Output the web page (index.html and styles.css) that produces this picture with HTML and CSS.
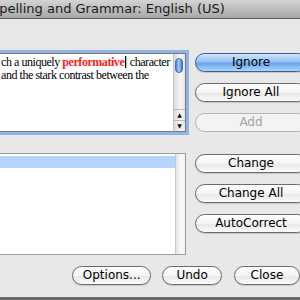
FILE: index.html
```html
<!DOCTYPE html>
<html lang="en">
<head>
    <meta charset="UTF-8">
    <meta name="viewport" content="width=device-width, initial-scale=1.0">
    <title>Spelling and Grammar</title>
    <link rel="stylesheet" href="styles.css">
</head>
<body>
    <div class="window">
        <div class="titlebar"><span class="title">Spelling and Grammar: English (US)</span></div>

        <div class="main">
            <div class="left">
                <div class="textbox">
                    <div class="text">
                        <div class="line">ch a uniquely <span class="misspelled">performative</span><span class="caret"></span> character</div>
                        <div class="line">and the stark contrast between the</div>
                    </div>
                    <div class="vscroll">
                        <div class="thumb"></div>
                        <div class="track"></div>
                        <div class="arrow up">&#9650;</div>
                        <div class="arrow down">&#9660;</div>
                    </div>
                </div>

                <div class="list">
                    <div class="rows">
                        <div class="row selected"></div>
                    </div>
                    <div class="list-scroll"></div>
                </div>
            </div>

            <div class="right">
                <div class="group">
                    <button class="btn default">Ignore</button>
                    <button class="btn">Ignore All</button>
                    <button class="btn disabled">Add</button>
                </div>
                <div class="group">
                    <button class="btn">Change</button>
                    <button class="btn">Change All</button>
                    <button class="btn">AutoCorrect</button>
                </div>
            </div>
        </div>

        <div class="bottom">
            <button class="btn options">Options...</button>
            <button class="btn undo">Undo</button>
            <button class="btn close">Close</button>
        </div>
    </div>
</body>
</html>
```

FILE: styles.css
```css
body {
    margin: 0;
    padding: 0;
    width: 300px;
    height: 300px;
    overflow: hidden;
    background: #e8e8e8;
    font-family: 'DejaVu Sans', 'Lucida Grande', sans-serif;
    font-size: 12px;
}
.window {
    height: 300px;
    box-sizing: border-box;
    border-bottom: 3px solid #6a6a6a;
    overflow: hidden;
}
.titlebar {
    height: 18px;
    line-height: 18px;
    background: linear-gradient(#d4d4d4, #b9b9b9 60%, #a8a8a8);
    border-bottom: 1px solid #5a5a5a;
    color: #1a1a1a;
    font-size: 13px;
    white-space: nowrap;
}
.title {
    display: inline-block;
    margin-left: -9px;
}
.main {
    display: flex;
    padding-top: 31px;
}
.left {
    width: 188px;
}
.textbox {
    display: flex;
    margin-left: -4px;
    width: 190px;
    height: 79px;
    box-sizing: border-box;
    background: #fff;
    border: 1px solid #7b7b7b;
    box-shadow: 0 0 0 3px #8fb5e6;
    margin-top: 3px;
}
.text {
    flex: 1;
    padding: 2px 0 0 4px;
    font-family: 'Liberation Serif', 'Times New Roman', serif;
    font-size: 12px;
    letter-spacing: -0.45px;
    line-height: 13px;
    color: #000;
    white-space: nowrap;
    overflow: hidden;
}
.misspelled {
    color: #ff2020;
    font-weight: bold;
}
.caret {
    display: inline-block;
    width: 1px;
    height: 12px;
    margin-left: 1px;
    background: #000;
    vertical-align: -2px;
    border-right: 1px solid #7fe0a0;
}
.vscroll {
    width: 11px;
    display: flex;
    flex-direction: column;
    border-left: 1px solid #c4c4c4;
    background: linear-gradient(90deg, #dcdcdc, #f6f6f6 60%, #e6e6e6);
    padding-top: 4px;
}
.thumb {
    width: 8px;
    height: 15px;
    margin-left: 1px;
    border-radius: 5px;
    border: 1px solid #3f6fb8;
    box-sizing: border-box;
    background: linear-gradient(90deg, #3a7ee0, #a9d0fa 45%, #5d9cec 80%, #2f70d4);
}
.track {
    flex: 1;
}
.arrow {
    height: 10px;
    line-height: 10px;
    font-size: 6px;
    text-align: center;
    color: #111;
    border-top: 1px solid #b9b9b9;
}
.list {
    display: flex;
    margin-top: 21px;
    margin-left: -4px;
    width: 190px;
    height: 102px;
    box-sizing: border-box;
    border: 1px solid #9c9c9c;
    background: #fff;
}
.rows {
    flex: 1;
    padding-top: 2px;
}
.row {
    height: 12px;
}
.row.selected {
    background: #b5d5ff;
}
.list-scroll {
    width: 9px;
    border-left: 1px solid #c9c9c9;
    background: linear-gradient(90deg, #e4e4e4, #fafafa 60%, #efefef);
}
.right {
    display: flex;
    flex-direction: column;
    gap: 22px;
    margin-left: 9px;
    padding-top: 3px;
}
.group {
    display: flex;
    flex-direction: column;
    gap: 11px;
}
.btn {
    display: block;
    height: 19px;
    width: 112px;
    box-sizing: border-box;
    padding: 0;
    border: 1px solid #6c6c6c;
    border-radius: 10px;
    background: linear-gradient(#ffffff, #f4f4f4 50%, #e8e8e8 55%, #fbfbfb);
    box-shadow: 0 1px 1px rgba(0, 0, 0, 0.15);
    font-family: 'DejaVu Sans', 'Lucida Grande', sans-serif;
    font-size: 12px;
    line-height: 17px;
    color: #000;
    text-align: center;
}
.btn.default {
    border-color: #3b5f99;
    background: linear-gradient(#d0e6fc, #94c1f3 45%, #6aa5ea 55%, #acd5fb);
}
.btn.disabled {
    border-color: #b4b4b4;
    color: #a3a3a3;
    background: #f3f3f3;
    box-shadow: none;
}
.bottom {
    display: flex;
    gap: 11px;
    padding-left: 72px;
    margin-top: 11px;
}
.options {
    width: 84px;
}
.undo {
    width: 63px;
}
.close {
    width: 70px;
    margin-left: 1px;
}
```
